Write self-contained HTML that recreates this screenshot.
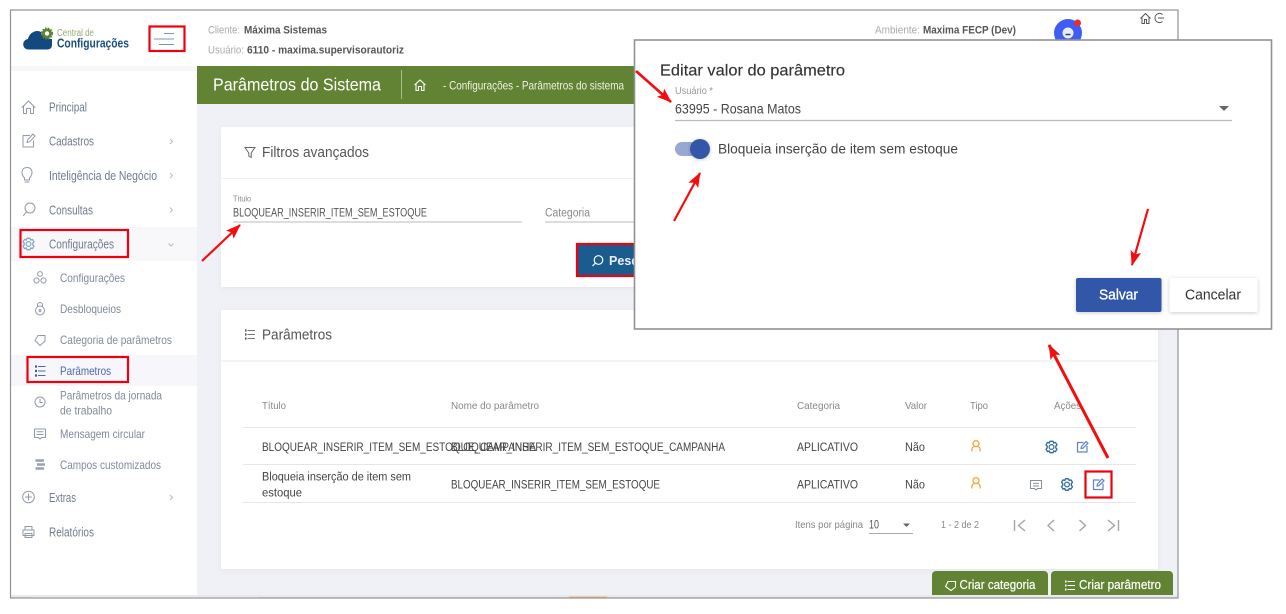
<!DOCTYPE html>
<html><head><meta charset="utf-8"><style>
html,body{margin:0;padding:0;background:#fff;width:1286px;height:614px;overflow:hidden}
svg{display:block;filter:blur(.35px)}
text{font-family:"Liberation Sans",sans-serif}
.s{fill:#6f7c8e;font-size:12.8px}
.ss{fill:#7f8a9c;font-size:11.6px}
.ic{fill:none;stroke:#929aa8;stroke-width:1;stroke-linecap:round;stroke-linejoin:round}
.d{fill:#444;font-size:12.4px}
.h{fill:#888;font-size:10.2px}
.red{fill:none;stroke:#f0000f;stroke-width:2.2}
.ar{stroke:#f40d0d;stroke-width:2.2;fill:none}
.b{fill:#555;font-weight:bold;font-size:10.8px}
.g{fill:#aaa;font-size:11px}
</style></head><body>
<svg width="1286" height="614" viewBox="0 0 1286 614" xmlns="http://www.w3.org/2000/svg">
<defs>
<marker id="m" markerWidth="15" markerHeight="11" refX="14" refY="5.500" orient="auto" markerUnits="userSpaceOnUse"><path d="M0 0L15 5.500L0 11L3 5.500Z" fill="#f40d0d"/></marker>
<filter id="sh" x="-10%" y="-10%" width="120%" height="120%"><feDropShadow dx="0" dy="1" stdDeviation="2" flood-color="#000" flood-opacity=".2"/></filter>
<filter id="sf" x="-5%" y="-5%" width="110%" height="110%"><feDropShadow dx="0" dy="1" stdDeviation="3" flood-color="#8088a0" flood-opacity=".12"/></filter>
<g id="gear" fill="none" stroke="#2f6a9c" stroke-width="1.200"><circle r="2.400"/><path transform="scale(1.100)" d="M-1.400-5.200L1.400-5.200 2 -3.600 3.600-4.200 5-2 3.900-.8 3.900.8 5 2 3.600 4.200 2 3.600 1.400 5.200-1.400 5.200-2 3.600-3.600 4.200-5 2-3.900.8-3.900-.8-5-2-3.600-4.200-2-3.600Z" stroke-linejoin="round"/></g>
<g id="edit" fill="none" stroke="#5f83c4" stroke-width="1.200" stroke-linejoin="round"><path d="M1-4.500H-5V5H4.500V-1"/><path d="M-1.500 1.500L-1 -.5 3.500-5.500 5.500-3.700 .5 1.200Z"/></g>
<g id="user" fill="none" stroke="#f5a631" stroke-width="1.300" stroke-linecap="round"><circle cy="-2.400" r="3"/><path d="M-4.200 5C-4.200 1-3 .6-1.800.6M4.200 5C4.200 1 3 .6 1.800.6"/></g>
</defs>

<!-- frame -->
<rect x="11" y="10" width="1167" height="588" fill="#fff"/>
<rect x="197" y="67" width="981" height="531" fill="#f0f1f7"/>
<rect x="11" y="66" width="186" height="5" fill="#f7f7f9"/>

<!-- logo -->
<path d="M29 49.500C21 49.500 22 39.500 28 39C29 33 36 29 41 32C42 36 46 39 52 39V45C52 48 50 49.500 47 49.500Z" fill="#124a80"/>
<circle cx="47" cy="33.500" r="3.600" fill="none" stroke="#5d8231" stroke-width="2.800"/>
<circle cx="47" cy="33.500" r="5.400" fill="none" stroke="#5d8231" stroke-width="1.400" stroke-dasharray="1.700 1.200"/>
<text x="57" y="36" font-size="10" fill="#93ad72" textLength="37" lengthAdjust="spacingAndGlyphs">Central de</text>
<text x="57" y="47.500" font-size="12.500" font-weight="bold" fill="#1b4f80" textLength="72" lengthAdjust="spacingAndGlyphs">Configurações</text>

<!-- hamburger -->
<path d="M164 33.500H174M154 39H174M159 44.500H174" stroke="#7d95b8" stroke-width="1.100"/>
<rect x="149.500" y="26.500" width="35" height="24.500" class="red"/>

<!-- header -->
<text x="208" y="33.700" class="g" textLength="32" lengthAdjust="spacingAndGlyphs">Cliente:</text>
<text x="244" y="33.700" class="b" textLength="83" lengthAdjust="spacingAndGlyphs">Máxima Sistemas</text>
<text x="208" y="53.700" class="g" textLength="36" lengthAdjust="spacingAndGlyphs">Usuário:</text>
<text x="247" y="53.700" class="b" textLength="157" lengthAdjust="spacingAndGlyphs">6110 - maxima.supervisorautoriz</text>
<text x="875" y="33.700" class="g" textLength="45" lengthAdjust="spacingAndGlyphs">Ambiente:</text>
<text x="923" y="33.700" class="b" textLength="93" lengthAdjust="spacingAndGlyphs">Maxima FECP (Dev)</text>
<circle cx="1068" cy="33" r="14" fill="#3f5df2"/>
<circle cx="1068" cy="33" r="5.500" fill="#e8ecfb"/>
<path d="M1065.500 34.500H1070.500" stroke="#27408f" stroke-width="1.500"/>
<circle cx="1077.500" cy="23" r="3.500" fill="#d8323a"/>
<path d="M1140.500 18.500L1145.500 13.500 1150.500 18.500M1142 17.500V23.500H1144.500V19.500H1146.500V23.500H1149V17.500" fill="none" stroke="#555" stroke-width="1"/>
<path d="M1162.500 14.500A4.600 4.600 0 1 0 1162.500 21.500M1158 18H1164" fill="none" stroke="#555" stroke-width="1"/>

<!-- green bar -->
<rect x="197" y="66" width="440" height="38" fill="#628234"/>
<text x="213" y="90.500" font-size="17.500" fill="#fff" textLength="168" lengthAdjust="spacingAndGlyphs">Parâmetros do Sistema</text>
<path d="M401.500 70V99" stroke="#a9bd8c" stroke-width="1"/>
<path d="M414.500 85L420 80 425.500 85M416 84V90.500H418.500V86.500H421.500V90.500H424V84" fill="none" stroke="#fff" stroke-width="1.100"/>
<text x="443" y="89.300" font-size="11.800" fill="#eef3e4" textLength="181" lengthAdjust="spacingAndGlyphs">- Configurações - Parâmetros do sistema</text>

<!-- sidebar -->
<rect x="11" y="227" width="186" height="34" fill="#f8f8fb"/>
<rect x="11" y="355" width="186" height="31" fill="#f7f7fb"/>

<path class="ic" d="M22 107.500L28.500 101 35 107.500M23.500 106V113.500H26.500V108.500H30.500V113.500H33.500V106"/>
<text x="49" y="111.300" class="s" textLength="38" lengthAdjust="spacingAndGlyphs">Principal</text>
<path class="ic" d="M29.500 135.500H23V147H33.500V141M27 142.500L27.500 140 33 134 35 136 29.500 141.800Z"/>
<text x="49" y="145.700" class="s" textLength="45" lengthAdjust="spacingAndGlyphs">Cadastros</text>
<path d="M170 139L172.500 141.500 170 144" fill="none" stroke="#bbb"/>
<path class="ic" d="M24.500 178C20 173 22 167.500 27 167.500C32 167.500 34 173 29.500 178V180H24.500ZM25 182H29"/>
<text x="49" y="179.800" class="s" textLength="108" lengthAdjust="spacingAndGlyphs">Inteligência de Negócio</text>
<path d="M170 173L172.500 175.500 170 178" fill="none" stroke="#bbb"/>
<circle class="ic" cx="30" cy="208" r="5"/><path class="ic" d="M26.500 212L23.500 215.500"/>
<text x="49" y="214.300" class="s" textLength="44" lengthAdjust="spacingAndGlyphs">Consultas</text>
<path d="M170 207.500L172.500 210 170 212.500" fill="none" stroke="#bbb"/>
<g transform="translate(28.500 244)" style="opacity:.55" ><use href="#gear"/></g>
<text x="49" y="248.300" class="s" textLength="65" lengthAdjust="spacingAndGlyphs">Configurações</text>
<path d="M168.500 243.500L171 246 173.500 243.500" fill="none" stroke="#bbb"/>
<rect x="20.500" y="230" width="107.500" height="27" class="red"/>

<g class="ic"><circle cx="40" cy="274" r="2.400"/><circle cx="36.500" cy="280.500" r="2.600"/><circle cx="43.500" cy="280.500" r="2.600"/></g>
<text x="60" y="282.200" class="ss" textLength="65" lengthAdjust="spacingAndGlyphs">Configurações</text>
<g class="ic"><circle cx="40" cy="310.500" r="4.500"/><path d="M37.500 306.500V305A2.500 2.500 0 0 1 42.500 305V306.500"/><circle cx="40" cy="310.500" r="1"/></g>
<text x="60" y="313.200" class="ss" textLength="61" lengthAdjust="spacingAndGlyphs">Desbloqueios</text>
<path class="ic" d="M38 335.500H45V341L40 345.500 35 340.500Z"/>
<text x="60" y="344.200" class="ss" textLength="112" lengthAdjust="spacingAndGlyphs">Categoria de parâmetros</text>
<path d="M38 366.500H45.500M38 371H45.500M38 375.500H45.500" stroke="#4b67a8" stroke-width="1"/>
<path d="M35 366.500H37M35 371H37M35 375.500H37" stroke="#3c5aa0" stroke-width="2.200"/>
<text x="60" y="375.200" class="ss" style="fill:#4a66ac" textLength="51" lengthAdjust="spacingAndGlyphs">Parâmetros</text>
<rect x="27.500" y="357" width="100.500" height="25" class="red"/>
<text x="60" y="399.300" class="ss" textLength="102" lengthAdjust="spacingAndGlyphs">Parâmetros da jornada</text>
<text x="60" y="414.300" class="ss" textLength="52" lengthAdjust="spacingAndGlyphs">de trabalho</text>
<circle class="ic" cx="40" cy="402" r="5"/><path class="ic" d="M40 399V402.500H42.500"/>
<path class="ic" d="M34.500 429H45.500V437.500H41.500L40 439 38.500 437.500H34.500ZM37 431.800H43M37 434.500H43"/>
<text x="60" y="438.200" class="ss" textLength="85" lengthAdjust="spacingAndGlyphs">Mensagem circular</text>
<path d="M35.500 460.500H44M37 464.500H45M35.500 468.500H44" stroke="#9aa2ae" stroke-width="2.500"/>
<text x="60" y="469.200" class="ss" textLength="101" lengthAdjust="spacingAndGlyphs">Campos customizados</text>
<circle class="ic" cx="28.500" cy="497" r="5.800"/><path class="ic" d="M28.500 494V500M25.500 497H31.500"/>
<text x="49" y="501.800" class="s" textLength="27" lengthAdjust="spacingAndGlyphs">Extras</text>
<path d="M170 495L172.500 497.500 170 500" fill="none" stroke="#bbb"/>
<path class="ic" d="M25 530V526.500H32V530M23 530H34V535.500H23ZM25 533.500H32V537.500H25Z"/>
<text x="49" y="536.300" class="s" textLength="45" lengthAdjust="spacingAndGlyphs">Relatórios</text>

<!-- card 1 -->
<rect x="221" y="127" width="937" height="160" fill="#fff" filter="url(#sf)"/>
<path d="M221 178.500H1158" stroke="#f1f1f4"/>
<path d="M245 147.500H255L251.200 153V157.500L248.800 156V153Z" fill="none" stroke="#666" stroke-width="1"/>
<text x="262" y="157" font-size="14.500" fill="#555" textLength="107" lengthAdjust="spacingAndGlyphs">Filtros avançados</text>
<text x="233" y="201.300" font-size="8.500" fill="#888" textLength="18" lengthAdjust="spacingAndGlyphs">Título</text>
<text x="233" y="216.300" font-size="11.500" fill="#555" textLength="194" lengthAdjust="spacingAndGlyphs">BLOQUEAR_INSERIR_ITEM_SEM_ESTOQUE</text>
<path d="M233 222H522" stroke="#bbb"/>
<text x="545" y="216.300" font-size="11.500" fill="#888" textLength="45" lengthAdjust="spacingAndGlyphs">Categoria</text>
<path d="M545 222H634" stroke="#bbb"/>
<rect x="577" y="244" width="60" height="32" fill="#1b5c8f" stroke="#f0000f" stroke-width="2.200"/>
<circle cx="598.500" cy="260" r="4.300" fill="none" stroke="#fff" stroke-width="1.200"/><path d="M595.500 263L592.500 266" stroke="#fff" stroke-width="1.200"/>
<text x="609" y="265" font-size="12.500" font-weight="bold" fill="#eef" textLength="30" lengthAdjust="spacingAndGlyphs">Pesq</text>

<!-- card 2 -->
<rect x="221" y="310" width="937" height="259" fill="#fff" filter="url(#sf)"/>
<path d="M221 361H1158" stroke="#f1f1f4" stroke-width="1.500"/>
<path d="M247.500 330.500H255M247.500 334.500H255M247.500 338.500H255" stroke="#777" stroke-width="1"/>
<path d="M245 330.500H246.500M245 334.500H246.500M245 338.500H246.500" stroke="#555" stroke-width="2.200"/>
<text x="262" y="339.500" font-size="14.500" fill="#555" textLength="70" lengthAdjust="spacingAndGlyphs">Parâmetros</text>

<text x="262" y="408.800" class="h" textLength="24" lengthAdjust="spacingAndGlyphs">Título</text>
<text x="451" y="408.800" class="h" textLength="88" lengthAdjust="spacingAndGlyphs">Nome do parâmetro</text>
<text x="797" y="408.800" class="h" textLength="43" lengthAdjust="spacingAndGlyphs">Categoria</text>
<text x="905" y="408.800" class="h" textLength="22" lengthAdjust="spacingAndGlyphs">Valor</text>
<text x="970" y="408.800" class="h" textLength="18" lengthAdjust="spacingAndGlyphs">Tipo</text>
<text x="1054" y="408.800" class="h" textLength="27" lengthAdjust="spacingAndGlyphs">Ações</text>
<path d="M243 427.500H1136M243 464.500H1136M243 502.500H1136" stroke="#e6e6e6"/>

<text x="262" y="450.800" class="d" textLength="274" lengthAdjust="spacingAndGlyphs">BLOQUEAR_INSERIR_ITEM_SEM_ESTOQUE_CAMPANHA</text>
<text x="451" y="450.800" class="d" textLength="274" lengthAdjust="spacingAndGlyphs">BLOQUEAR_INSERIR_ITEM_SEM_ESTOQUE_CAMPANHA</text>
<text x="797" y="450.800" class="d" textLength="61" lengthAdjust="spacingAndGlyphs">APLICATIVO</text>
<text x="905" y="450.800" class="d" textLength="20" lengthAdjust="spacingAndGlyphs">Não</text>
<use href="#user" x="976" y="446"/>
<use href="#gear" x="1051.500" y="447"/>
<use href="#edit" x="1082.500" y="447"/>

<text x="262" y="480.300" class="d" textLength="149" lengthAdjust="spacingAndGlyphs">Bloqueia inserção de item sem</text>
<text x="262" y="496.300" class="d" textLength="40" lengthAdjust="spacingAndGlyphs">estoque</text>
<text x="451" y="488.300" class="d" textLength="209" lengthAdjust="spacingAndGlyphs">BLOQUEAR_INSERIR_ITEM_SEM_ESTOQUE</text>
<text x="797" y="488.300" class="d" textLength="61" lengthAdjust="spacingAndGlyphs">APLICATIVO</text>
<text x="905" y="488.300" class="d" textLength="20" lengthAdjust="spacingAndGlyphs">Não</text>
<use href="#user" x="976" y="483"/>
<path d="M1030.500 480.500H1041.500V488.500H1037.500L1036 490 1034.500 488.500H1030.500ZM1033 483.300H1039M1033 486H1039" fill="none" stroke="#8a8f96" stroke-width="1"/>
<use href="#gear" x="1067" y="484.500"/>
<use href="#edit" x="1098.500" y="484.500"/>
<rect x="1085.500" y="471.500" width="26" height="26" class="red"/>

<text x="795" y="528.200" class="h" textLength="68" lengthAdjust="spacingAndGlyphs">Itens por página</text>
<text x="869" y="528.700" font-size="11.500" fill="#555" textLength="10" lengthAdjust="spacingAndGlyphs">10</text>
<path d="M903 523.500H910L906.500 527Z" fill="#666"/>
<path d="M869 533.500H913" stroke="#aaa"/>
<text x="941" y="528.200" class="h" textLength="38" lengthAdjust="spacingAndGlyphs">1 - 2 de 2</text>
<g fill="none" stroke="#a5a5a5" stroke-width="1.400"><path d="M1014.500 520V531M1025 520L1018.500 525.500 1025 531"/><path d="M1054 520L1048 525.500 1054 531"/><path d="M1079.500 520L1085.500 525.500 1079.500 531"/><path d="M1108 520L1114.500 525.500 1108 531M1118.500 520V531"/></g>

<!-- bottom strip + buttons -->
<rect x="11" y="595" width="1167" height="3" fill="#e9e9ec"/>
<rect x="32" y="597" width="226" height="1" fill="#fff"/>
<rect x="569" y="596.500" width="38" height="2" fill="#f3b27a"/>
<path d="M932 595V575A4 4 0 0 1 936 571H1044A4 4 0 0 1 1048 575V595Z" fill="#628234"/>
<path d="M1051 595V575A4 4 0 0 1 1055 571H1169A4 4 0 0 1 1173 575V595Z" fill="#628234"/>
<path d="M948 581.500H955.500V587L951 590.500 945.500 586.500Z" fill="none" stroke="#fff" stroke-width="1.100"/>
<text x="959.500" y="589" font-size="13" fill="#fff" stroke="#fff" stroke-width=".2" textLength="76" lengthAdjust="spacingAndGlyphs">Criar categoria</text>
<path d="M1067.500 581.500H1075M1067.500 585.500H1075M1067.500 589.500H1075" stroke="#fff" stroke-width="1"/>
<path d="M1065 581.500H1066.500M1065 585.500H1066.500M1065 589.500H1066.500" stroke="#fff" stroke-width="2"/>
<text x="1079" y="589" font-size="13" fill="#fff" stroke="#fff" stroke-width=".2" textLength="82" lengthAdjust="spacingAndGlyphs">Criar parâmetro</text>

<!-- frame border -->
<rect x="10.500" y="10" width="1167.500" height="588" fill="none" stroke="#929292" stroke-width="1.200"/>

<!-- modal -->
<rect x="634.500" y="40" width="637" height="289" fill="#fff" stroke="#929292" stroke-width="1.600"/>
<text x="660" y="75.500" font-size="16" fill="#333" stroke="#333" stroke-width=".15" textLength="185" lengthAdjust="spacingAndGlyphs">Editar valor do parâmetro</text>
<text x="675" y="94" font-size="10" fill="#999" textLength="38" lengthAdjust="spacingAndGlyphs">Usuário *</text>
<text x="675" y="113.300" font-size="14" fill="#444" textLength="126" lengthAdjust="spacingAndGlyphs">63995 - Rosana Matos</text>
<path d="M1219 106H1229L1224 111Z" fill="#666"/>
<path d="M675 120.500H1232" stroke="#bbb" stroke-width="1.200"/>
<rect x="675" y="142" width="30" height="14" rx="7" fill="#98a8d2"/>
<circle cx="700" cy="149" r="10" fill="#3557a8" filter="url(#sh)"/>
<text x="718" y="153.300" font-size="14" fill="#444" textLength="240" lengthAdjust="spacingAndGlyphs">Bloqueia inserção de item sem estoque</text>
<rect x="1076" y="278" width="85.500" height="34" rx="2" fill="#3356a8" filter="url(#sh)"/>
<text x="1099" y="299.500" font-size="14.500" fill="#fff" stroke="#fff" stroke-width=".3" textLength="39" lengthAdjust="spacingAndGlyphs">Salvar</text>
<rect x="1169.500" y="278" width="88" height="34" rx="2" fill="#fff" filter="url(#sh)"/>
<text x="1185" y="299.500" font-size="14.500" fill="#333" textLength="56" lengthAdjust="spacingAndGlyphs">Cancelar</text>

<!-- arrows -->
<path class="ar" d="M202 261L240 225" marker-end="url(#m)"/>
<path class="ar" d="M636 71L671 102" style="stroke-width:2.600" marker-end="url(#m)"/>
<path class="ar" d="M674 221L700 173" marker-end="url(#m)"/>
<path class="ar" d="M1148 209L1132 265" marker-end="url(#m)"/>
<path class="ar" d="M1108 458L1049 345" style="stroke-width:3" marker-end="url(#m)"/>
</svg>
</body></html>
